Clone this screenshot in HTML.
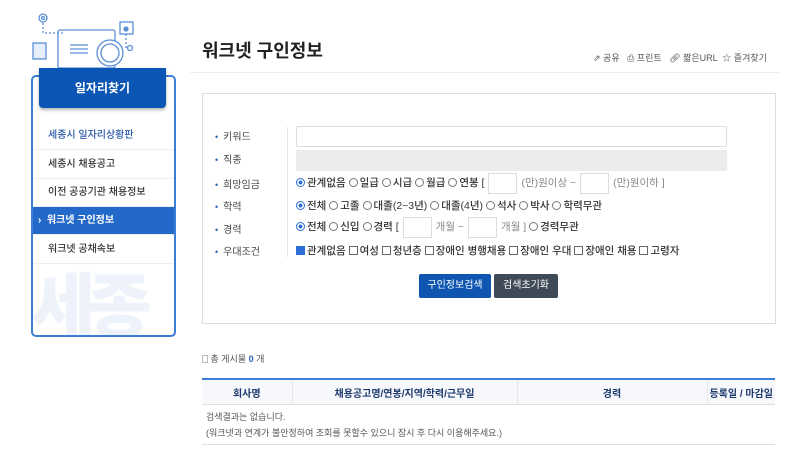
<!DOCTYPE html>
<html><head><meta charset="utf-8"><style>
*{margin:0;padding:0;box-sizing:border-box}
body{width:800px;height:463px;background:#fff;font-family:"Liberation Sans","Noto Sans CJK KR",sans-serif;color:#333;position:relative;overflow:hidden;font-size:11px}
.a{position:absolute}
.side{left:31px;top:75px;width:145px;height:262px;border:2px solid #3c7fd8;border-radius:5px;overflow:hidden}
.hd{left:39px;top:68px;width:127px;height:40px;background:#0b56b4;color:#fff;font-size:12px;font-weight:bold;text-align:center;line-height:40px;border-radius:0 0 4px 4px;box-shadow:0 2px 3px rgba(0,0,0,.3)}
.mi{position:absolute;left:0;width:141px;height:28px;line-height:28px;padding-left:15px;font-size:10px;color:#333;border-bottom:1px solid #eee;font-weight:500}
.lab{position:absolute;left:215px;font-size:10px;color:#444}
.lab:before{content:"•";color:#2a62b8;margin-right:5px;font-size:9px}
.opt{position:absolute;left:296px;font-size:10.5px;color:#333;white-space:nowrap;font-weight:500}
.rb{display:inline-block;width:9px;height:9px;border:1px solid #777;border-radius:50%;vertical-align:-1px;margin-right:2px}
.rb.on{border-color:#2b6fd6;background:radial-gradient(#2b6fd6 35%,#fff 45%)}
.cb{display:inline-block;width:9px;height:9px;border:1px solid #666;vertical-align:-1px;margin-right:2px;position:relative}
.cb.on{background:#2b6fd6;border-color:#2b6fd6}
.bx{display:inline-block;width:29px;height:21px;border:1px solid #ddd;vertical-align:middle;margin:0 4px}
.g{color:#888;font-weight:normal}
th{font-size:10px;color:#1e3a6e;font-weight:bold;height:26px;background:#f6f8fb;border-left:1px solid #e6e6e6}
th:first-child{border-left:none}
</style></head><body>
<svg class="a" style="left:30px;top:10px" width="110" height="62" viewBox="0 0 110 62" fill="none" stroke="#5b8fd6" stroke-width="1.3">
<circle cx="13" cy="8" r="4"/><circle cx="13" cy="8" r="1.5"/>
<rect x="28" y="20" width="57" height="38" rx="2"/><line x1="40" y1="35" x2="58" y2="35"/><line x1="40" y1="39" x2="58" y2="39"/><line x1="40" y1="43" x2="58" y2="43"/>
<circle cx="80" cy="43" r="13" fill="#fff"/><circle cx="80" cy="43" r="9"/>
<rect x="3" y="33" width="13" height="16" fill="#e6eefb"/><rect x="90" y="12" width="13" height="12"/><circle cx="96" cy="19" r="2" fill="#5b8fd6"/>
<path d="M13 13v10h20M96 24v15" stroke-dasharray="2 2"/><circle cx="100" cy="38" r="2.5"/>
</svg>
<div class="side a">
<div class="a" style="left:-2px;top:190px;font-size:70px;font-weight:900;color:#eef3fb;letter-spacing:-8px;line-height:80px">세종</div>
<div class="mi" style="top:45px;color:#2b56a8">세종시 일자리상황판</div>
<div class="mi" style="top:74px">세종시 채용공고</div>
<div class="mi" style="top:102px">이전 공공기관 채용정보</div>
<div class="mi" style="top:130px;background:#2369c9;color:#fff;font-weight:bold;padding-left:5px">›&nbsp; 워크넷 구인정보</div>
<div class="mi" style="top:159px">워크넷 공채속보</div>
</div>
<div class="hd a">일자리찾기</div>
<div class="a" style="left:202px;top:37px;font-size:18px;font-weight:bold;color:#222">워크넷 구인정보</div>
<div class="a" style="left:593px;top:51px;font-size:9px;color:#555;white-space:nowrap">⇗ 공유 &nbsp;&nbsp;⎙ 프린트 &nbsp;&nbsp;🔗︎ 짧은URL &nbsp;☆ 즐겨찾기</div>
<div class="a" style="left:190px;top:72px;width:590px;height:1px;background:#eee"></div>
<div class="a" style="left:202px;top:93px;width:574px;height:231px;border:1px solid #ddd"></div>
<div class="a" style="left:287px;top:127px;width:1px;height:130px;background:#e5e5e5"></div>
<div class="lab" style="top:128px">키워드</div>
<div class="lab" style="top:151px">직종</div>
<div class="lab" style="top:176px">희망임금</div>
<div class="lab" style="top:198px">학력</div>
<div class="lab" style="top:221px">경력</div>
<div class="lab" style="top:243px">우대조건</div>
<div class="a" style="left:296px;top:126px;width:431px;height:21px;border:1px solid #ddd;border-radius:2px"></div>
<div class="a" style="left:296px;top:150px;width:431px;height:21px;background:#ececec;border-radius:2px"></div>
<div class="opt" style="top:172px;line-height:22px"><span class="rb on"></span>관계없음 <span class="rb"></span>일급 <span class="rb"></span>시급 <span class="rb"></span>월급 <span class="rb"></span>연봉 [<span class="bx"></span><span class="g">(만)원이상 ~</span><span class="bx"></span><span class="g">(만)원이하 ]</span></div>
<div class="opt" style="top:198px"><span class="rb on"></span>전체 <span class="rb"></span>고졸 <span class="rb"></span>대졸(2~3년) <span class="rb"></span>대졸(4년) <span class="rb"></span>석사 <span class="rb"></span>박사 <span class="rb"></span>학력무관</div>
<div class="opt" style="top:216px;line-height:22px"><span class="rb on"></span>전체 <span class="rb"></span>신입 <span class="rb"></span>경력 [<span class="bx"></span><span class="g">개월 ~</span><span class="bx"></span><span class="g">개월 ]</span> <span class="rb"></span>경력무관</div>
<div class="opt" style="top:243px"><span class="cb on"></span>관계없음 <span class="cb"></span>여성 <span class="cb"></span>청년층 <span class="cb"></span>장애인 병행채용 <span class="cb"></span>장애인 우대 <span class="cb"></span>장애인 채용 <span class="cb"></span>고령자</div>
<div class="a" style="left:419px;top:274px;width:72px;height:24px;background:#0e56b0;color:#fff;font-size:10px;text-align:center;line-height:24px;border-radius:2px">구인정보검색</div>
<div class="a" style="left:494px;top:274px;width:64px;height:24px;background:#3e4a57;color:#fff;font-size:10px;text-align:center;line-height:24px;border-radius:2px">검색초기화</div>
<div class="a" style="left:202px;top:352px;font-size:9px;color:#555"><span style="display:inline-block;width:6px;height:8px;border:1px solid #bbb;vertical-align:-1px"></span> 총 게시물 <b style="color:#2a62b8">0</b> 개</div>
<table class="a" style="left:202px;top:378px;width:573px;border-collapse:collapse;border-top:2px solid #3c7fd8;table-layout:fixed">
<tr><th style="width:90px">회사명</th><th style="width:225px">채용공고명/연봉/지역/학력/근무일</th><th style="width:190px">경력</th><th style="width:68px">등록일 / 마감일</th></tr>
</table>
<div class="a" style="left:202px;top:404px;width:573px;height:1px;background:#e0e0e0"></div>
<div class="a" style="left:206px;top:409px;font-size:9px;color:#555;line-height:16px">검색결과는 없습니다.<br>(워크넷과 연계가 불안정하여 조회를 못할수 있으니 잠시 후 다시 이용해주세요.)</div>
<div class="a" style="left:202px;top:444px;width:573px;height:1px;background:#e0e0e0"></div>
</body></html>
